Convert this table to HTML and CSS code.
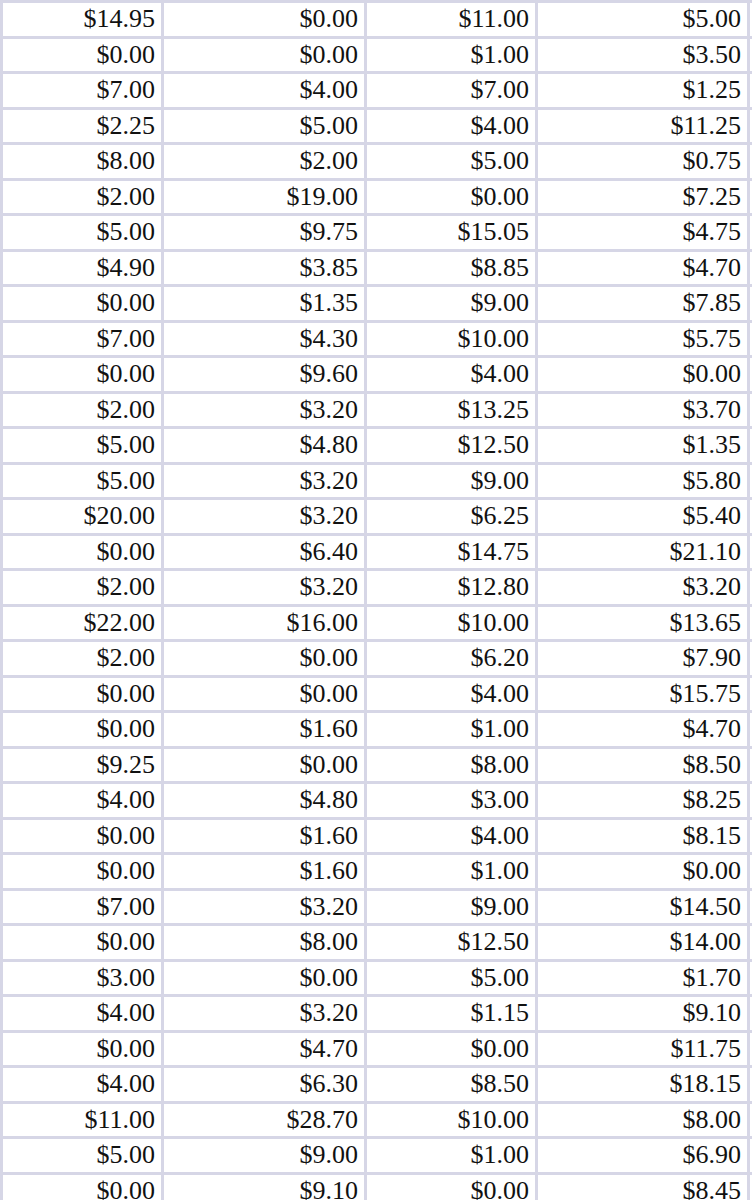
FILE: index.html
```html
<!DOCTYPE html>
<html>
<head>
<meta charset="utf-8">
<link rel="stylesheet" href="styles.css">
</head>
<body>
<div class="sheet">
<div class="c">$14.95</div><div class="c">$0.00</div><div class="c">$11.00</div><div class="c">$5.00</div><div class="e"></div>
<div class="c">$0.00</div><div class="c">$0.00</div><div class="c">$1.00</div><div class="c">$3.50</div><div class="e"></div>
<div class="c">$7.00</div><div class="c">$4.00</div><div class="c">$7.00</div><div class="c">$1.25</div><div class="e"></div>
<div class="c">$2.25</div><div class="c">$5.00</div><div class="c">$4.00</div><div class="c">$11.25</div><div class="e"></div>
<div class="c">$8.00</div><div class="c">$2.00</div><div class="c">$5.00</div><div class="c">$0.75</div><div class="e"></div>
<div class="c">$2.00</div><div class="c">$19.00</div><div class="c">$0.00</div><div class="c">$7.25</div><div class="e"></div>
<div class="c">$5.00</div><div class="c">$9.75</div><div class="c">$15.05</div><div class="c">$4.75</div><div class="e"></div>
<div class="c">$4.90</div><div class="c">$3.85</div><div class="c">$8.85</div><div class="c">$4.70</div><div class="e"></div>
<div class="c">$0.00</div><div class="c">$1.35</div><div class="c">$9.00</div><div class="c">$7.85</div><div class="e"></div>
<div class="c">$7.00</div><div class="c">$4.30</div><div class="c">$10.00</div><div class="c">$5.75</div><div class="e"></div>
<div class="c">$0.00</div><div class="c">$9.60</div><div class="c">$4.00</div><div class="c">$0.00</div><div class="e"></div>
<div class="c">$2.00</div><div class="c">$3.20</div><div class="c">$13.25</div><div class="c">$3.70</div><div class="e"></div>
<div class="c">$5.00</div><div class="c">$4.80</div><div class="c">$12.50</div><div class="c">$1.35</div><div class="e"></div>
<div class="c">$5.00</div><div class="c">$3.20</div><div class="c">$9.00</div><div class="c">$5.80</div><div class="e"></div>
<div class="c">$20.00</div><div class="c">$3.20</div><div class="c">$6.25</div><div class="c">$5.40</div><div class="e"></div>
<div class="c">$0.00</div><div class="c">$6.40</div><div class="c">$14.75</div><div class="c">$21.10</div><div class="e"></div>
<div class="c">$2.00</div><div class="c">$3.20</div><div class="c">$12.80</div><div class="c">$3.20</div><div class="e"></div>
<div class="c">$22.00</div><div class="c">$16.00</div><div class="c">$10.00</div><div class="c">$13.65</div><div class="e"></div>
<div class="c">$2.00</div><div class="c">$0.00</div><div class="c">$6.20</div><div class="c">$7.90</div><div class="e"></div>
<div class="c">$0.00</div><div class="c">$0.00</div><div class="c">$4.00</div><div class="c">$15.75</div><div class="e"></div>
<div class="c">$0.00</div><div class="c">$1.60</div><div class="c">$1.00</div><div class="c">$4.70</div><div class="e"></div>
<div class="c">$9.25</div><div class="c">$0.00</div><div class="c">$8.00</div><div class="c">$8.50</div><div class="e"></div>
<div class="c">$4.00</div><div class="c">$4.80</div><div class="c">$3.00</div><div class="c">$8.25</div><div class="e"></div>
<div class="c">$0.00</div><div class="c">$1.60</div><div class="c">$4.00</div><div class="c">$8.15</div><div class="e"></div>
<div class="c">$0.00</div><div class="c">$1.60</div><div class="c">$1.00</div><div class="c">$0.00</div><div class="e"></div>
<div class="c">$7.00</div><div class="c">$3.20</div><div class="c">$9.00</div><div class="c">$14.50</div><div class="e"></div>
<div class="c">$0.00</div><div class="c">$8.00</div><div class="c">$12.50</div><div class="c">$14.00</div><div class="e"></div>
<div class="c">$3.00</div><div class="c">$0.00</div><div class="c">$5.00</div><div class="c">$1.70</div><div class="e"></div>
<div class="c">$4.00</div><div class="c">$3.20</div><div class="c">$1.15</div><div class="c">$9.10</div><div class="e"></div>
<div class="c">$0.00</div><div class="c">$4.70</div><div class="c">$0.00</div><div class="c">$11.75</div><div class="e"></div>
<div class="c">$4.00</div><div class="c">$6.30</div><div class="c">$8.50</div><div class="c">$18.15</div><div class="e"></div>
<div class="c">$11.00</div><div class="c">$28.70</div><div class="c">$10.00</div><div class="c">$8.00</div><div class="e"></div>
<div class="c">$5.00</div><div class="c">$9.00</div><div class="c">$1.00</div><div class="c">$6.90</div><div class="e"></div>
<div class="c">$0.00</div><div class="c">$9.10</div><div class="c">$0.00</div><div class="c">$8.45</div><div class="e"></div>
</div>
</body>
</html>
```
FILE: styles.css
```css
html, body {
  margin: 0;
  padding: 0;
  background: #ffffff;
  overflow: hidden;
}
.sheet {
  display: grid;
  grid-template-columns: 158px 200px 168px 209px 1fr;
  grid-auto-rows: 32.5px;
  gap: 3px;
  padding: 0 0 0 0;
  margin-top: 0;
  border-top: 3px solid #d6d6e6;
  border-left: 3px solid #d6d6e6;
  background: #d6d6e6;
  font-family: "Liberation Serif", "Times New Roman", serif;
  font-size: 26px;
  color: #111111;
}
.c {
  background: #ffffff;
  display: flex;
  align-items: center;
  justify-content: flex-end;
  padding-right: 6px;
  line-height: 1;
}
.e {
  background: #ffffff;
}
```
